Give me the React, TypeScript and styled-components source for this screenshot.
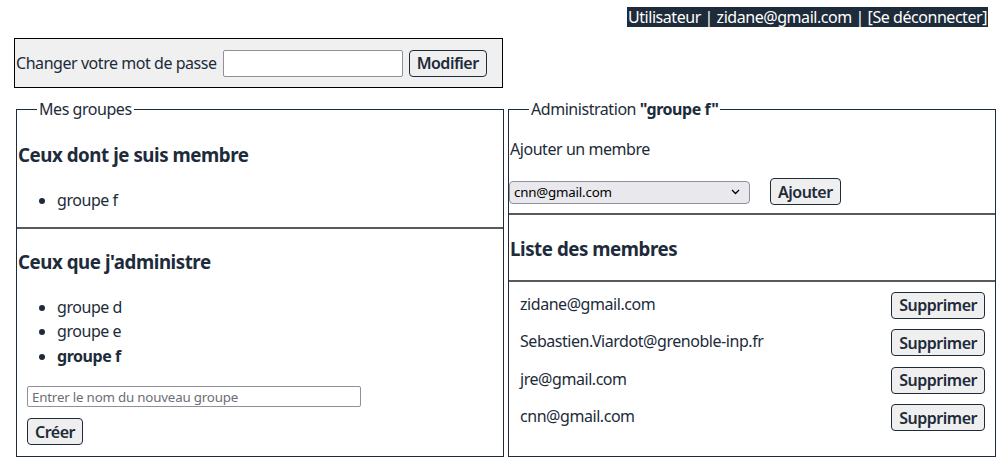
import React from "react";
import styled, { createGlobalStyle } from "styled-components";

const INK = "#1d2b3a";

const GlobalStyle = createGlobalStyle`
  html, body { margin: 0; padding: 0; background: #fff; }
  body {
    font-family: "Noto Sans", "Open Sans", sans-serif;
    font-size: 16px;
    letter-spacing: -0.45px;
    color: ${INK};
  }
  * { box-sizing: border-box; }
`;

const Page = styled.div`
  padding: 7px 10px 0 14px;
  width: 1008px;
`;

const TopBar = styled.div`
  display: flex;
  justify-content: flex-end;
  padding-right: 10px;
  height: 20px;
`;

const UserBadge = styled.span`
  background: ${INK};
  color: #fff;
  line-height: 20px;
  padding: 0 1px;
  white-space: nowrap;
`;

const PasswordBox = styled.form`
  display: flex;
  align-items: center;
  width: 489px;
  height: 50px;
  margin-top: 11px;
  border: 1px solid #000;
  background: #f0f0f0;
  padding: 0 0 0 1px;
  gap: 6px;
`;

const Label = styled.span`
  white-space: nowrap;
`;

const TextInput = styled.input<{ $w: number; $h: number; $small?: boolean }>`
  width: ${(p) => p.$w}px;
  height: ${(p) => p.$h}px;
  border: 1px solid #8f8f9d;
  border-radius: 2px;
  background: #fff;
  font-family: inherit;
  letter-spacing: -0.2px;
  font-size: ${(p) => (p.$small ? "13.33px" : "16px")};
  color: ${INK};
  padding: 0 4px;
  &::placeholder { color: #6d6d76; }
`;

const Button = styled.button`
  font-family: inherit;
  font-size: 16px;
  font-weight: 600;
  letter-spacing: -0.5px;
  color: ${INK};
  background: #efefef;
  border: 1px solid ${INK};
  border-radius: 4px;
  height: 27px;
  padding: 0 7px;
  line-height: 1;
  white-space: nowrap;
`;

const Columns = styled.div`
  display: grid;
  grid-template-columns: 492px 492px;
  margin-top: 11px;
`;

const Panel = styled.fieldset`
  margin: 0 2px;
  padding: 0;
  border: 1px solid ${INK};
  min-width: 0;
  height: 358px;
`;

const Legend = styled.legend`
  margin-left: 20px;
  padding: 0 2px;
  line-height: 20px;
  font-size: 16px;
`;

const Section = styled.section<{ $pt: number; $pb: number; $divider?: boolean }>`
  padding: ${(p) => p.$pt}px 0 ${(p) => p.$pb}px;
  border-top: ${(p) => (p.$divider ? "2px solid #5a5a5a" : "none")};
`;

const Heading = styled.h3`
  margin: 0;
  font-size: 18.72px;
  line-height: 22px;
  font-weight: 700;
  padding-left: 1px;
`;

const GroupList = styled.ul`
  margin: 22px 0 0;
  padding-left: 40px;
  line-height: 24.5px;
`;

const GroupItem = styled.li<{ $active?: boolean }>`
  font-weight: ${(p) => (p.$active ? 700 : 400)};
`;

const CreateForm = styled.form`
  display: flex;
  flex-direction: column;
  align-items: flex-start;
  gap: 11px;
  margin: 18px 0 0 10px;
`;

const Text = styled.p`
  margin: 0;
  line-height: 20px;
  padding-left: 1px;
`;

const AddRow = styled.div`
  display: flex;
  align-items: center;
  gap: 20px;
  margin-top: 19px;
`;

const SelectWrap = styled.div`
  position: relative;
  width: 241px;
  height: 23px;
`;

const Select = styled.select`
  appearance: none;
  width: 100%;
  height: 100%;
  border: 1px solid #8f8f9d;
  border-radius: 4px;
  background: #e9e9ed;
  font-family: inherit;
  letter-spacing: -0.2px;
  font-size: 13.33px;
  color: #000;
  padding: 0 4px;
`;

const Chevron = styled.svg`
  position: absolute;
  right: 10px;
  top: 9px;
  pointer-events: none;
`;

const MemberList = styled.ul`
  list-style: none;
  margin: 0;
  padding: 9px 10px 0 11px;
  display: flex;
  flex-direction: column;
  gap: 9.5px;
`;

const MemberRow = styled.li`
  display: flex;
  align-items: center;
  justify-content: space-between;
  height: 28px;
`;

const MemberName = styled.span`
  margin-bottom: 3px;
`;

const members = [
  "zidane@gmail.com",
  "Sebastien.Viardot@grenoble-inp.fr",
  "jre@gmail.com",
  "cnn@gmail.com",
];

export default function App() {
  return (
    <>
      <GlobalStyle />
      <Page>
        <TopBar>
          <UserBadge>Utilisateur | zidane@gmail.com | [Se déconnecter]</UserBadge>
        </TopBar>
        <PasswordBox onSubmit={(e) => e.preventDefault()}>
          <Label>Changer votre mot de passe</Label>
          <TextInput type="password" $w={180} $h={27} />
          <Button type="submit">Modifier</Button>
        </PasswordBox>
        <Columns>
          <Panel>
            <Legend>Mes groupes</Legend>
            <Section $pt={25} $pb={14}>
              <Heading>Ceux dont je suis membre</Heading>
              <GroupList>
                <GroupItem>groupe f</GroupItem>
              </GroupList>
            </Section>
            <Section $pt={22} $pb={10} $divider>
              <Heading>Ceux que j'administre</Heading>
              <GroupList>
                <GroupItem>groupe d</GroupItem>
                <GroupItem>groupe e</GroupItem>
                <GroupItem $active>groupe f</GroupItem>
              </GroupList>
              <CreateForm onSubmit={(e) => e.preventDefault()}>
                <TextInput
                  type="text"
                  placeholder="Entrer le nom du nouveau groupe"
                  $w={334}
                  $h={21}
                  $small
                />
                <Button type="submit">Créer</Button>
              </CreateForm>
            </Section>
          </Panel>
          <Panel>
            <Legend>
              Administration <b>"groupe f"</b>
            </Legend>
            <Section $pt={20} $pb={8}>
              <Text>Ajouter un membre</Text>
              <AddRow>
                <SelectWrap>
                  <Select defaultValue="cnn@gmail.com">
                    <option>cnn@gmail.com</option>
                    <option>jre@gmail.com</option>
                  </Select>
                  <Chevron width="9" height="6" viewBox="0 0 9 6">
                    <path d="M1 1 L4.5 4.5 L8 1" fill="none" stroke="#000" strokeWidth="1.3" />
                  </Chevron>
                </SelectWrap>
                <Button type="button">Ajouter</Button>
              </AddRow>
            </Section>
            <Section $pt={23} $pb={20} $divider>
              <Heading>Liste des membres</Heading>
            </Section>
            <Section $pt={0} $pb={0} $divider>
              <MemberList>
                {members.map((m) => (
                  <MemberRow key={m}>
                    <MemberName>{m}</MemberName>
                    <Button type="button">Supprimer</Button>
                  </MemberRow>
                ))}
              </MemberList>
            </Section>
          </Panel>
        </Columns>
      </Page>
    </>
  );
}
